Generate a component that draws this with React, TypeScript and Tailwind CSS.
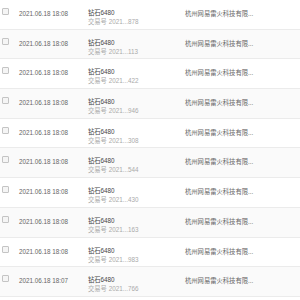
const rows = [
  { time: "2021.06.18 18:08", no: "878" },
  { time: "2021.06.18 18:08", no: "113" },
  { time: "2021.06.18 18:08", no: "422" },
  { time: "2021.06.18 18:08", no: "946" },
  { time: "2021.06.18 18:08", no: "308" },
  { time: "2021.06.18 18:08", no: "544" },
  { time: "2021.06.18 18:08", no: "430" },
  { time: "2021.06.18 18:08", no: "163" },
  { time: "2021.06.18 18:08", no: "983" },
  { time: "2021.06.18 18:07", no: "766" },
];

export default function App() {
  return (
    <div className="w-[300px] h-[300px] overflow-hidden bg-white font-['Liberation_Sans','Noto_Sans_CJK_SC',sans-serif] text-[6.3px] leading-[9px]">
      {rows.map((r, i) => (
        <div
          key={i}
          className={`flex h-[29.7px] border-b border-[#ebebeb] pt-[8px] ${i % 2 === 1 ? "bg-[#fafafa]" : "bg-white"}`}
        >
          <div className="w-[19px] shrink-0 pl-[2px] pt-[-1px]">
            <span className="block w-[7px] h-[7px] border border-[#c4c4c4] rounded-[1px] bg-[#f5f5f5]" />
          </div>
          <div className="w-[69px] shrink-0 pt-px text-[#666]">{r.time}</div>
          <div className="w-[97px] shrink-0">
            <div className="text-[#444]">钻石6480</div>
            <div className="text-[#aaa]">交易号 2021...{r.no}</div>
          </div>
          <div className="pt-px text-[#666]">杭州网易雷火科技有限...</div>
        </div>
      ))}
    </div>
  );
}
